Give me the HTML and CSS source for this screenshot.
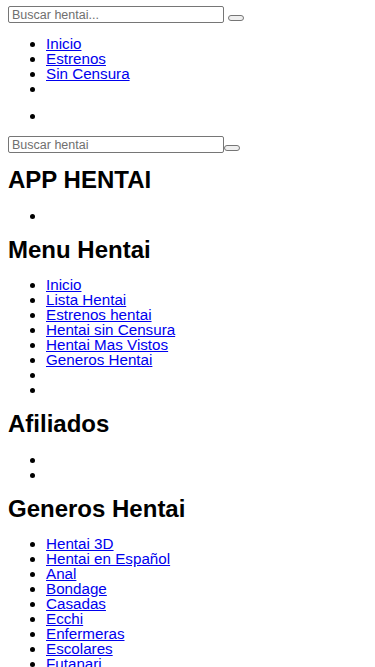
FILE: index.html
```html
<!DOCTYPE html>
<html lang="es">
<head>
<meta charset="utf-8">
<meta name="viewport" content="width=device-width, initial-scale=1">
<title>App Hentai</title>
<link rel="stylesheet" href="styles.css">
</head>
<body>
<form class="search search-top">
  <input class="search-input" type="text" placeholder="Buscar hentai..."><button class="search-btn" type="submit"></button>
</form>
<ul class="list">
  <li><a href="#">Inicio</a></li>
  <li><a href="#">Estrenos</a></li>
  <li><a href="#">Sin Censura</a></li>
  <li class="item-tall"></li>
  <li></li>
</ul>
<form class="search search-side">
  <input class="search-input" type="text" placeholder="Buscar hentai"><button class="search-btn" type="submit"></button>
</form>
<h2 class="title">APP HENTAI</h2>
<ul class="list">
  <li></li>
</ul>
<h2 class="title">Menu Hentai</h2>
<ul class="list">
  <li><a href="#">Inicio</a></li>
  <li><a href="#">Lista Hentai</a></li>
  <li><a href="#">Estrenos hentai</a></li>
  <li><a href="#">Hentai sin Censura</a></li>
  <li><a href="#">Hentai Mas Vistos</a></li>
  <li><a href="#">Generos Hentai</a></li>
  <li></li>
  <li></li>
</ul>
<h2 class="title">Afiliados</h2>
<ul class="list">
  <li></li>
  <li></li>
</ul>
<h2 class="title">Generos Hentai</h2>
<ul class="list">
  <li><a href="#">Hentai 3D</a></li>
  <li><a href="#">Hentai en Español</a></li>
  <li><a href="#">Anal</a></li>
  <li><a href="#">Bondage</a></li>
  <li><a href="#">Casadas</a></li>
  <li><a href="#">Ecchi</a></li>
  <li><a href="#">Enfermeras</a></li>
  <li><a href="#">Escolares</a></li>
  <li><a href="#">Futanari</a></li>
</ul>
</body>
</html>
```
FILE: styles.css
```css
html, body {
  background: #ffffff;
}
body {
  margin: 6px 8px;
  font-family: "Liberation Sans", Arial, sans-serif;
  font-size: 15.2px;
  line-height: 15px;
  color: #000000;
}
.search {
  display: flex;
  align-items: flex-start;
  margin: 0;
}
.search-top {
  gap: 4px;
}
.search-input {
  box-sizing: border-box;
  width: 216px;
  height: 17px;
  margin: 0;
  padding: 0 3px;
  border: 1px solid #767676;
  border-radius: 2px;
  background: #ffffff;
  font-family: "Liberation Sans", Arial, sans-serif;
  font-size: 12.5px;
  color: #000000;
  outline: none;
}
.search-input::placeholder {
  color: #6f6f6f;
}
.search-btn {
  box-sizing: border-box;
  width: 16px;
  height: 6px;
  margin: 9px 0 0;
  padding: 0;
  border: 1px solid #767676;
  border-radius: 3px;
  background: #efefef;
  -webkit-appearance: none;
  appearance: none;
}
.list {
  margin: 13px 0;
  padding-left: 38px;
  list-style: disc;
}
.list li {
  line-height: 15px;
}
.list .item-tall {
  min-height: 27px;
}
.list a {
  color: #0000ee;
  text-decoration: underline;
}
.title {
  margin: 16px 0;
  font-size: 24px;
  line-height: 22.5px;
  font-weight: bold;
}
```
